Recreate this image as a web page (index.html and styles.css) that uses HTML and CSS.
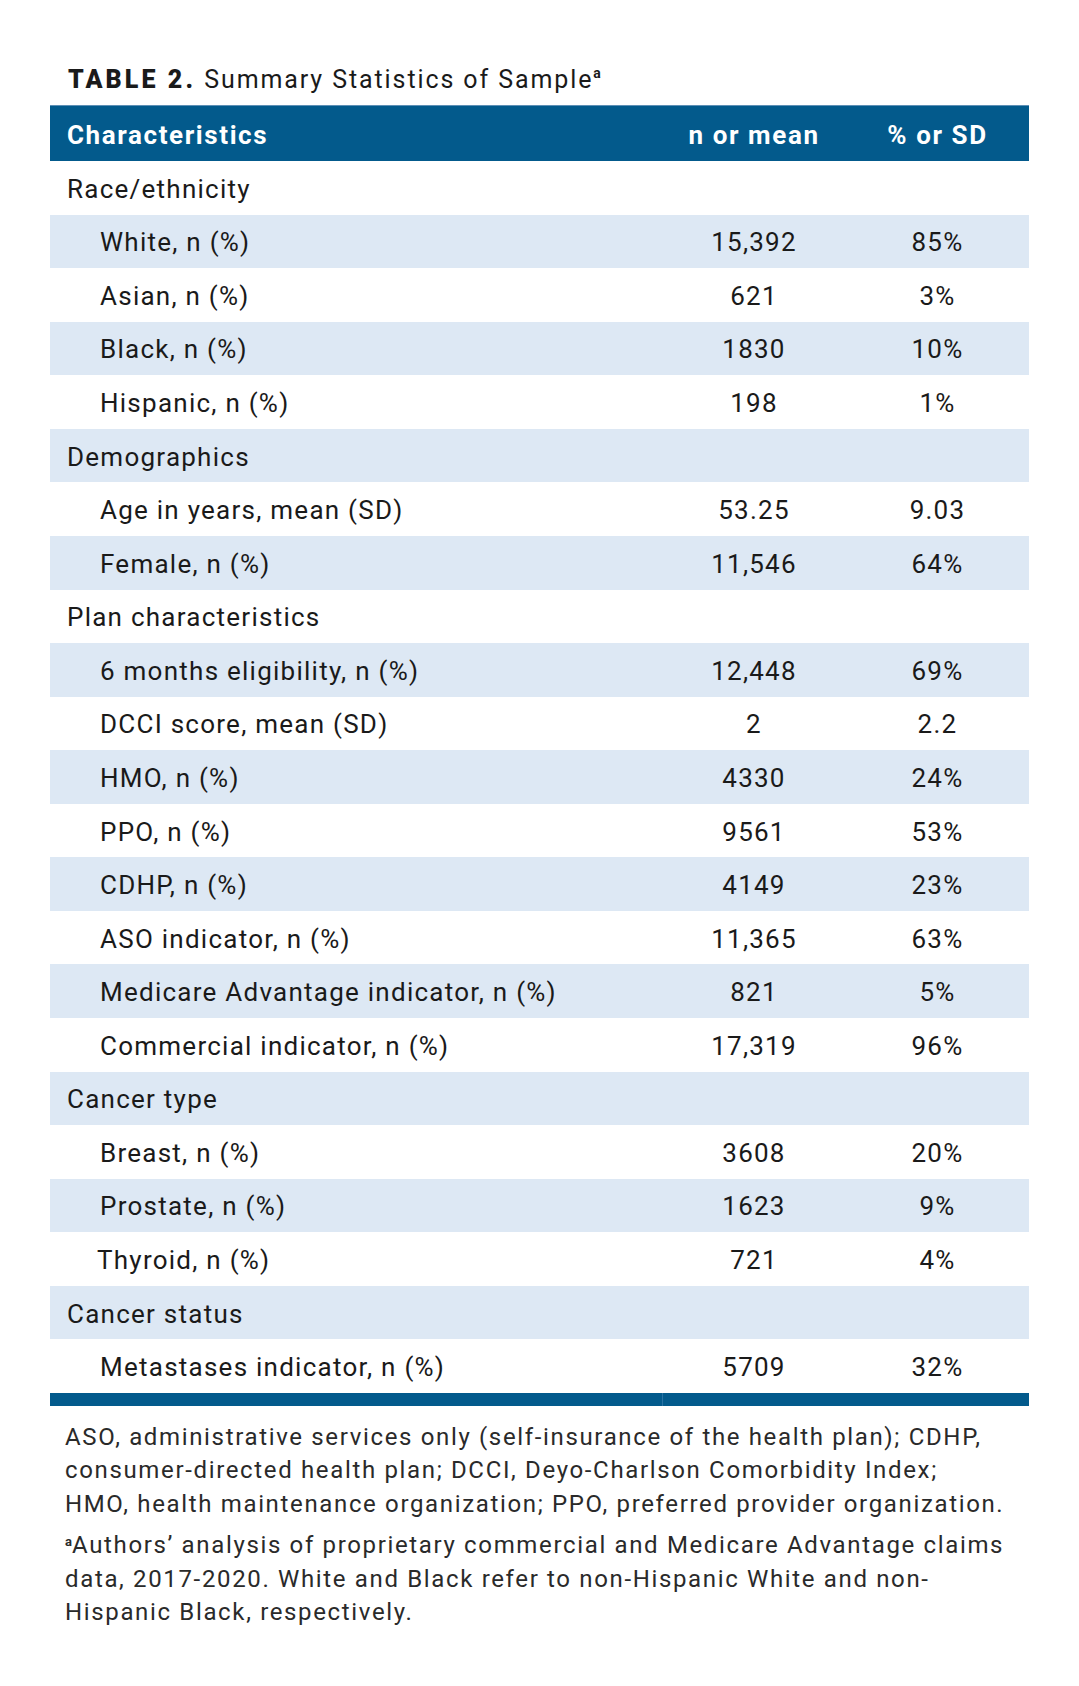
FILE: index.html
```html
<!DOCTYPE html>
<html lang="en">
<head>
<meta charset="utf-8">
<title>Table 2. Summary Statistics of Sample</title>
<link rel="stylesheet" href="styles.css">
</head>
<body>
<div class="page">
  <h1 class="title"><span class="title-label">TABLE 2.</span> Summary Statistics of Sample<sup class="sup">a</sup></h1>
  <div class="table">
    <div class="row head">
      <div class="cell c1">Characteristics</div>
      <div class="cell c2">n or mean</div>
      <div class="cell c3">% or SD</div>
    </div>
    <div class="row"><div class="cell c1">Race/ethnicity</div><div class="cell c2"></div><div class="cell c3"></div></div>
    <div class="row alt"><div class="cell c1 sub">White, n (%)</div><div class="cell c2">15,392</div><div class="cell c3">85%</div></div>
    <div class="row"><div class="cell c1 sub">Asian, n (%)</div><div class="cell c2">621</div><div class="cell c3">3%</div></div>
    <div class="row alt"><div class="cell c1 sub">Black, n (%)</div><div class="cell c2">1830</div><div class="cell c3">10%</div></div>
    <div class="row"><div class="cell c1 sub">Hispanic, n (%)</div><div class="cell c2">198</div><div class="cell c3">1%</div></div>
    <div class="row alt"><div class="cell c1">Demographics</div><div class="cell c2"></div><div class="cell c3"></div></div>
    <div class="row"><div class="cell c1 sub">Age in years, mean (SD)</div><div class="cell c2">53.25</div><div class="cell c3">9.03</div></div>
    <div class="row alt"><div class="cell c1 sub">Female, n (%)</div><div class="cell c2">11,546</div><div class="cell c3">64%</div></div>
    <div class="row"><div class="cell c1">Plan characteristics</div><div class="cell c2"></div><div class="cell c3"></div></div>
    <div class="row alt"><div class="cell c1 sub">6 months eligibility, n (%)</div><div class="cell c2">12,448</div><div class="cell c3">69%</div></div>
    <div class="row"><div class="cell c1 sub">DCCI score, mean (SD)</div><div class="cell c2">2</div><div class="cell c3">2.2</div></div>
    <div class="row alt"><div class="cell c1 sub">HMO, n (%)</div><div class="cell c2">4330</div><div class="cell c3">24%</div></div>
    <div class="row"><div class="cell c1 sub">PPO, n (%)</div><div class="cell c2">9561</div><div class="cell c3">53%</div></div>
    <div class="row alt"><div class="cell c1 sub">CDHP, n (%)</div><div class="cell c2">4149</div><div class="cell c3">23%</div></div>
    <div class="row"><div class="cell c1 sub">ASO indicator, n (%)</div><div class="cell c2">11,365</div><div class="cell c3">63%</div></div>
    <div class="row alt"><div class="cell c1 sub">Medicare Advantage indicator, n (%)</div><div class="cell c2">821</div><div class="cell c3">5%</div></div>
    <div class="row"><div class="cell c1 sub">Commercial indicator, n (%)</div><div class="cell c2">17,319</div><div class="cell c3">96%</div></div>
    <div class="row alt"><div class="cell c1">Cancer type</div><div class="cell c2"></div><div class="cell c3"></div></div>
    <div class="row"><div class="cell c1 sub">Breast, n (%)</div><div class="cell c2">3608</div><div class="cell c3">20%</div></div>
    <div class="row alt"><div class="cell c1 sub">Prostate, n (%)</div><div class="cell c2">1623</div><div class="cell c3">9%</div></div>
    <div class="row"><div class="cell c1 sub sub-tight">Thyroid, n (%)</div><div class="cell c2">721</div><div class="cell c3">4%</div></div>
    <div class="row alt"><div class="cell c1">Cancer status</div><div class="cell c2"></div><div class="cell c3"></div></div>
    <div class="row"><div class="cell c1 sub">Metastases indicator, n (%)</div><div class="cell c2">5709</div><div class="cell c3">32%</div></div>
    <div class="foot-bar"><div class="bar-a"></div><div class="bar-b"></div></div>
  </div>
  <div class="notes">
    <p class="note">ASO, administrative services only (self-insurance of the health plan); CDHP,<br>consumer-directed health plan; DCCI, Deyo-Charlson Comorbidity Index;<br>HMO, health maintenance organization; PPO, preferred provider organization.</p>
    <p class="note"><sup class="note-sup">a</sup>Authors’ analysis of proprietary commercial and Medicare Advantage claims<br>data, 2017-2020. White and Black refer to non-Hispanic White and non-<br>Hispanic Black, respectively.</p>
  </div>
</div>
</body>
</html>
```

FILE: styles.css
```css
html, body {
  margin: 0;
  padding: 0;
  background: #ffffff;
}

body {
  font-family: Roboto, "Noto Sans", "Liberation Sans", sans-serif;
  color: #1a1a1a;
}

.page {
  padding: 65px 50px 0 50px;
  width: 979px;
}

.title {
  margin: 0 0 10px 18px;
  font-size: 25px;
  line-height: 30px;
  font-weight: 400;
  color: #1a1a1a;
  letter-spacing: 1.9px;
  white-space: nowrap;
}

.title-label {
  font-weight: 900;
  letter-spacing: 3.1px;
}

.sup {
  font-size: 14px;
  font-weight: 700;
  vertical-align: 10px;
  line-height: 0;
  letter-spacing: 0;
}

.table {
  display: flex;
  flex-direction: column;
  width: 979px;
}

.row {
  display: flex;
  height: 53.57px;
  align-items: center;
  font-size: 26px;
  letter-spacing: 1.25px;
}

.row.alt {
  background: #dde8f4;
}

.row.head {
  height: 56px;
  background: #035a8c;
  border-top: 1px solid #5d8fb5;
  box-sizing: border-box;
  color: #ffffff;
  font-weight: 700;
  letter-spacing: 1.6px;
}

.cell {
  box-sizing: border-box;
  white-space: nowrap;
  padding-top: 2px;
}

.c1 {
  width: 612px;
  padding-left: 17px;
}

.c1.sub {
  padding-left: 50px;
}

.c1.sub-tight {
  padding-left: 47px;
}

.c2 {
  width: 184px;
  text-align: center;
}

.c3 {
  width: 183px;
  text-align: center;
}

.foot-bar {
  display: flex;
  height: 13px;
}

.bar-a {
  width: 612px;
  background: #035a8c;
  border-right: 1px solid #2a72a3;
}

.bar-b {
  flex: 1;
  background: #035a8c;
}

.notes {
  padding: 15px 0 0 15px;
}

.note {
  margin: 0 0 8px 0;
  font-size: 24px;
  line-height: 33.5px;
  color: #2a2a2a;
  letter-spacing: 1.65px;
  white-space: nowrap;
}

.note-sup {
  font-size: 13px;
  font-weight: 700;
  vertical-align: 7px;
  line-height: 0;
  letter-spacing: 0;
}
```
